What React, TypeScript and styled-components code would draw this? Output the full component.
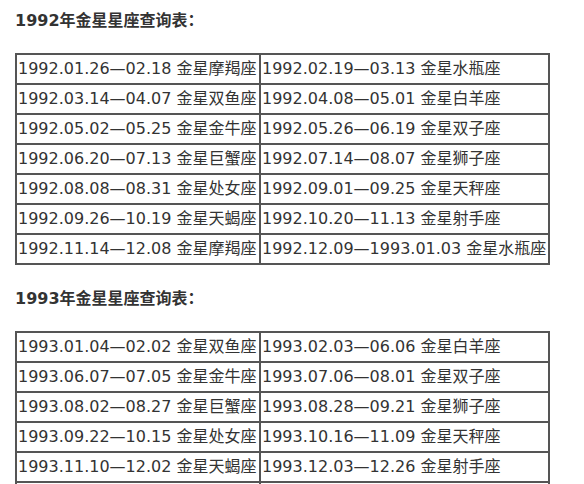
import * as React from "react";
import styled, { createGlobalStyle } from "styled-components";

const GlobalStyle = createGlobalStyle`
  html, body {
    margin: 0;
    padding: 0;
    background: #ffffff;
  }
`;

const Page = styled.div`
  padding: 9px 0 0 15px;
  font-family: "DejaVu Sans", "Noto Sans CJK SC", sans-serif;
  color: #333333;
`;

const Section = styled.section`
  display: flex;
  flex-direction: column;
  gap: 22px;
  margin-bottom: 22px;
`;

const Heading = styled.h3`
  margin: 0;
  font-size: 16px;
  line-height: 20px;
  font-weight: bold;
  color: #333333;
`;

const Colon = styled.span`
  font-family: "Noto Sans CJK SC", sans-serif;
`;

const Table = styled.table`
  width: 533px;
  table-layout: fixed;
  border-collapse: collapse;
  border: 2px solid #555555;
`;

const Cell = styled.td`
  border: 2px solid #555555;
  height: 28px;
  padding: 0 0 0 1px;
  font-size: 16px;
  line-height: 20px;
  white-space: nowrap;
  color: #333333;
`;

type Row = [string, string];

const data: { year: string; rows: Row[] }[] = [
  {
    year: "1992",
    rows: [
      ["1992.01.26—02.18 金星摩羯座", "1992.02.19—03.13 金星水瓶座"],
      ["1992.03.14—04.07 金星双鱼座", "1992.04.08—05.01 金星白羊座"],
      ["1992.05.02—05.25 金星金牛座", "1992.05.26—06.19 金星双子座"],
      ["1992.06.20—07.13 金星巨蟹座", "1992.07.14—08.07 金星狮子座"],
      ["1992.08.08—08.31 金星处女座", "1992.09.01—09.25 金星天秤座"],
      ["1992.09.26—10.19 金星天蝎座", "1992.10.20—11.13 金星射手座"],
      ["1992.11.14—12.08 金星摩羯座", "1992.12.09—1993.01.03 金星水瓶座"],
    ],
  },
  {
    year: "1993",
    rows: [
      ["1993.01.04—02.02 金星双鱼座", "1993.02.03—06.06 金星白羊座"],
      ["1993.06.07—07.05 金星金牛座", "1993.07.06—08.01 金星双子座"],
      ["1993.08.02—08.27 金星巨蟹座", "1993.08.28—09.21 金星狮子座"],
      ["1993.09.22—10.15 金星处女座", "1993.10.16—11.09 金星天秤座"],
      ["1993.11.10—12.02 金星天蝎座", "1993.12.03—12.26 金星射手座"],
      ["1993.12.27—1994.01.19 金星摩羯座", "1994.01.20—02.13 金星水瓶座"],
    ],
  },
];

export default function App() {
  return (
    <>
      <GlobalStyle />
      <Page>
        {data.map((block) => (
          <Section key={block.year}>
            <Heading>
              {block.year}年金星星座查询表<Colon>：</Colon>
            </Heading>
            <Table>
              <colgroup>
                <col style={{ width: 244 }} />
                <col style={{ width: 289 }} />
              </colgroup>
              <tbody>
                {block.rows.map((row, i) => (
                  <tr key={i}>
                    <Cell>{row[0]}</Cell>
                    <Cell>{row[1]}</Cell>
                  </tr>
                ))}
              </tbody>
            </Table>
          </Section>
        ))}
      </Page>
    </>
  );
}
